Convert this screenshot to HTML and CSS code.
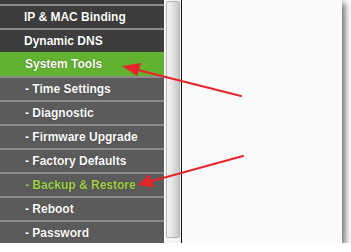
FILE: index.html
```html
<!DOCTYPE html>
<html lang="en">
<head>
  <meta charset="UTF-8">
  <title>System Tools</title>
  <link rel="stylesheet" href="styles.css">
</head>
<body>
  <div class="frame">
    <div class="menu">
      <div class="menu-top"></div>
      <a class="item" href="#">IP &amp; MAC Binding</a>
      <a class="item" href="#">Dynamic DNS</a>
      <a class="item active" href="#">System Tools</a>
      <a class="item sub" href="#">- Time Settings</a>
      <a class="item sub" href="#">- Diagnostic</a>
      <a class="item sub" href="#">- Firmware Upgrade</a>
      <a class="item sub" href="#">- Factory Defaults</a>
      <a class="item sub current" href="#">- Backup &amp; Restore</a>
      <a class="item sub" href="#">- Reboot</a>
      <a class="item sub last" href="#">- Password</a>
    </div>
    <div class="scrollbar">
      <div class="thumb"></div>
    </div>
    <div class="content"></div>

    <svg class="arrows" width="351" height="252" viewBox="0 0 351 252">
      <g stroke="#e8232a" stroke-width="2" fill="#e8232a" stroke-linecap="round">
        <line x1="241" y1="96" x2="136" y2="69.5"/>
        <polygon stroke="none" points="122,66 141,63 137,76"/>
        <line x1="243" y1="156" x2="152" y2="181"/>
        <polygon stroke="none" points="138,185 149,174.5 154,187.5"/>
      </g>
    </svg>
  </div>
</body>
</html>
```

FILE: styles.css
```css
body {
  margin: 0;
  padding: 0;
  background: #fff;
  font-family: "Liberation Sans", Arial, sans-serif;
}
.frame {
  position: relative;
  display: flex;
  width: 342px;
  height: 243px;
  box-shadow: 3px 3px 7px rgba(0, 0, 0, 0.6);
}
.menu {
  width: 164px;
  display: flex;
  flex-direction: column;
  background: #5b5b5b;
  border-right: 1px solid #fff;
  overflow: hidden;
}
.menu-top {
  height: 4px;
  background: #3d3d3d;
}
.item {
  display: flex;
  align-items: center;
  flex: none;
  height: 22px;
  padding-left: 24px;
  border-top: 2px solid #8a8a8a;
  background: #3d3d3d;
  color: #fff;
  font-size: 12px;
  font-weight: bold;
  text-decoration: none;
  text-shadow: 0 0 1px rgba(0, 0, 0, 0.6);
}
.item.active {
  height: 24px;
  border-top: 0;
  padding-left: 25px;
  background: #62b22f;
}
.item.sub {
  background: #5b5b5b;
  padding-left: 25px;
  border-top-color: #8c8c8c;
}
.item.current {
  color: #a3d14a;
}
.item.last {
  height: 21px;
}
.scrollbar {
  width: 17px;
  padding: 1px 1px 5px 1px;
  box-sizing: border-box;
  background: #f4f4f4;
  border-right: 1px solid #111;
}
.thumb {
  height: 100%;
  box-sizing: border-box;
  border: 1px solid #b5b5b5;
  border-radius: 2px;
  background: linear-gradient(to right, #f2f2f2, #e6e6e6 40%, #d2d2d2 75%, #c6c6c6);
}
.content {
  flex: 1;
  background: #fafafa;
}
.arrows {
  position: absolute;
  left: 0;
  top: 0;
  pointer-events: none;
}
```
